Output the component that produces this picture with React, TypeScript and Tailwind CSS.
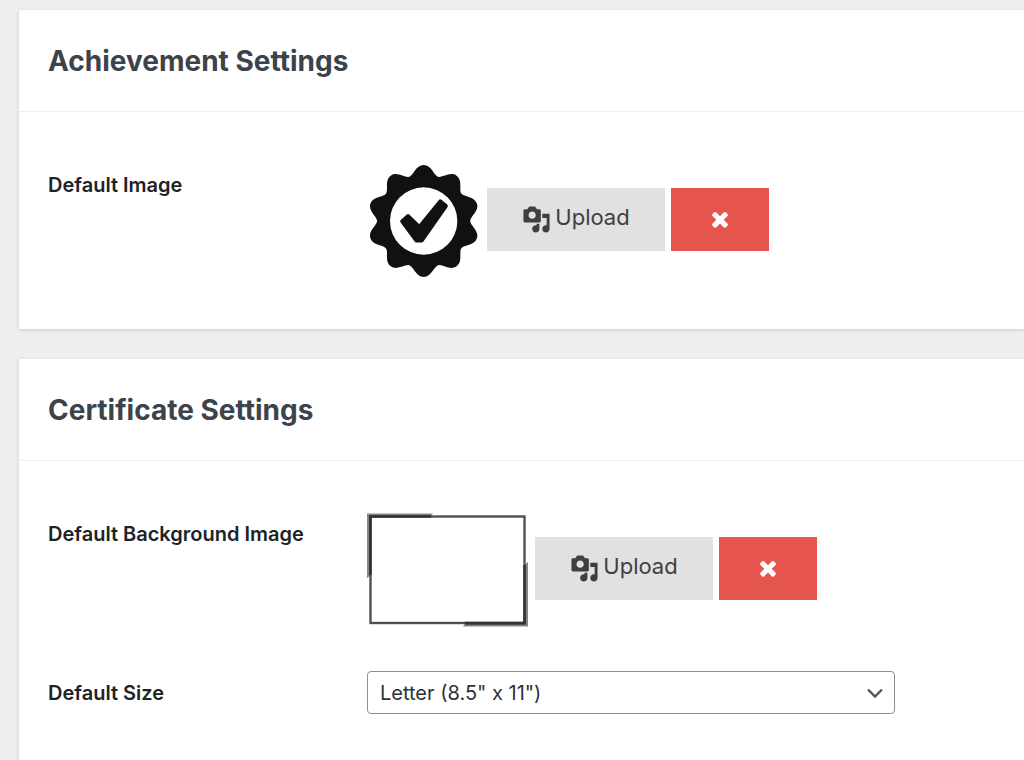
import type { ReactNode } from "react";

function petalPath(cx: number, cy: number, count: number) {
  const step = (Math.PI * 2) / count;
  const point = (angle: number, along: number, out: number) => {
    const x = cx + Math.sin(angle) * out + Math.cos(angle) * along;
    const y = cy - Math.cos(angle) * out + Math.sin(angle) * along;
    return `${x.toFixed(1)} ${y.toFixed(1)}`;
  };
  let d = `M${point(0, -43, 133)}`;
  for (let i = 0; i < count; i++) {
    const a = i * step;
    d += ` C${point(a, -30, 137)} ${point(a, -24, 168)} ${point(a, 0, 168)}`;
    d += ` C${point(a, 24, 168)} ${point(a, 30, 137)} ${point(a, 43, 133)}`;
  }
  return d + "Z";
}

const badge = petalPath(171, 171, 10);

function BadgeImage() {
  return (
    <svg className="h-[114px] w-[114px] shrink-0" viewBox="1 0 342 342" role="img" aria-label="Achievement badge">
      <path d={badge} fill="#111" />
      <circle cx="171" cy="171" r="101" fill="#fff" />
      <path
        d="M107 172 L124 157 L158 190 L221 113 L237 126 L165 229 L149 229Z"
        fill="#111"
        stroke="#111"
        strokeWidth="13"
        strokeLinejoin="round"
      />
    </svg>
  );
}

function FrameImage() {
  return (
    <svg className="h-[114px] w-[162px] shrink-0" viewBox="0 0 162 114" role="img" aria-label="Certificate background">
      <path d="M0 65V0.500H66L63 4H4V62Z" fill="#858585" />
      <path d="M161 49V113.500H96L99 109H157V52Z" fill="#858585" />
      <path d="M2 62V2.500H64L62 4.500H4.500V60Z" fill="#333" />
      <path d="M159 52V111.500H98L100 109H156V54Z" fill="#333" />
      <rect x="3.500" y="3.500" width="154" height="106.500" fill="#fff" stroke="#505050" strokeWidth="2.400" />
      <path d="M3.500 62V3.500H64M157.500 52V110H98" fill="none" stroke="#333" strokeWidth="2.400" />
    </svg>
  );
}

function MediaIcon() {
  return (
    <svg className="h-[29px] w-[29px] shrink-0" viewBox="0 0 20 20" fill="currentColor" aria-hidden="true">
      <path d="M13 11V4c0-.55-.45-1-1-1h-1.670L9 1H5L3.670 3H2c-.55 0-1 .45-1 1v7c0 .55.45 1 1 1h10c.55 0 1-.45 1-1zM7 4.500c1.380 0 2.500 1.120 2.500 2.500S8.380 9.500 7 9.500 4.500 8.380 4.500 7 5.620 4.500 7 4.500zM14 6h5v10.500c0 1.380-1.120 2.500-2.500 2.500S14 17.880 14 16.500s1.120-2.500 2.500-2.500c.17 0 .34.02.5.05V9h-3V6zm-4 8.050V13h2v3.500c0 1.380-1.120 2.500-2.500 2.500S7 17.880 7 16.500 8.120 14 9.500 14c.17 0 .34.02.5.05z" />
    </svg>
  );
}

function TimesIcon() {
  return (
    <svg className="h-6 w-6" viewBox="0 0 1792 1792" fill="currentColor" aria-hidden="true">
      <path d="M1490 1322q0 40-28 68l-136 136q-28 28-68 28t-68-28l-294-294-294 294q-28 28-68 28t-68-28l-136-136q-28-28-28-68t28-68l294-294-294-294q-28-28-28-68t28-68l136-136q28-28 68-28t68 28l294 294 294-294q28-28 68-28t68 28l136 136q28 28 28 68t-28 68l-294 294 294 294q28 28 28 68z" />
    </svg>
  );
}

function Card({ title, children }: { title: string; children: ReactNode }) {
  return (
    <section className="bg-white shadow-[0_1px_4px_rgba(0,0,0,0.16)]">
      <h2 className="border-b border-[#efefef] px-[29px] pt-[33px] pb-8 text-[28px] leading-9 font-bold text-[#3c434a]">
        {title}
      </h2>
      <div className="flex flex-col gap-11 px-[29px] pt-[52px] pb-[51px]">{children}</div>
    </section>
  );
}

function ImageField({ label, children }: { label: string; children: ReactNode }) {
  return (
    <div role="group" aria-label={label} className="grid grid-cols-[319px_1fr]">
      <span className="pt-[7px] text-xl font-semibold">{label}</span>
      <div className="flex items-start gap-1.5">
        {children}
        <div className="flex gap-1.5 pt-6">
          <button
            type="button"
            className="flex h-[63px] w-[178px] items-center justify-center gap-1 bg-[#e1e1e1] text-[22px] text-[#3f3f3f]"
          >
            <MediaIcon />
            <span className="pb-1">Upload</span>
          </button>
          <button
            type="button"
            aria-label="Remove image"
            className="flex h-[63px] w-[98px] items-center justify-center bg-[#e5554e] pb-0.5 text-white"
          >
            <TimesIcon />
          </button>
        </div>
      </div>
    </div>
  );
}

export default function App() {
  return (
    <main className="flex min-h-screen flex-col gap-[30px] bg-[#efefef] pt-2.5 pl-[19px] font-['Inter','Liberation_Sans',sans-serif] text-[#1d2327]">
      <Card title="Achievement Settings">
        <ImageField label="Default Image">
          <BadgeImage />
        </ImageField>
      </Card>
      <Card title="Certificate Settings">
        <ImageField label="Default Background Image">
          <FrameImage />
        </ImageField>
        <div className="grid grid-cols-[319px_1fr] items-center">
          <label htmlFor="default-size" className="text-xl font-semibold">
            Default Size
          </label>
          <div className="grid max-w-[528px] items-center">
            <select
              id="default-size"
              defaultValue="letter"
              className="col-start-1 row-start-1 h-[43px] w-full appearance-none rounded-[4px] border border-[#8c8f94] bg-white px-3 text-xl text-[#2c3338]"
            >
              <option value="letter">Letter (8.5" x 11")</option>
              <option value="a4">A4 (21cm x 29.7cm)</option>
            </select>
            <svg
              className="pointer-events-none col-start-1 row-start-1 mr-3 h-4 w-4 justify-self-end"
              viewBox="0 0 16 16"
              fill="none"
              stroke="#555"
              strokeWidth="2.400"
              aria-hidden="true"
            >
              <path d="M1 4.500L8 11.500L15 4.500" />
            </svg>
          </div>
        </div>
      </Card>
    </main>
  );
}
